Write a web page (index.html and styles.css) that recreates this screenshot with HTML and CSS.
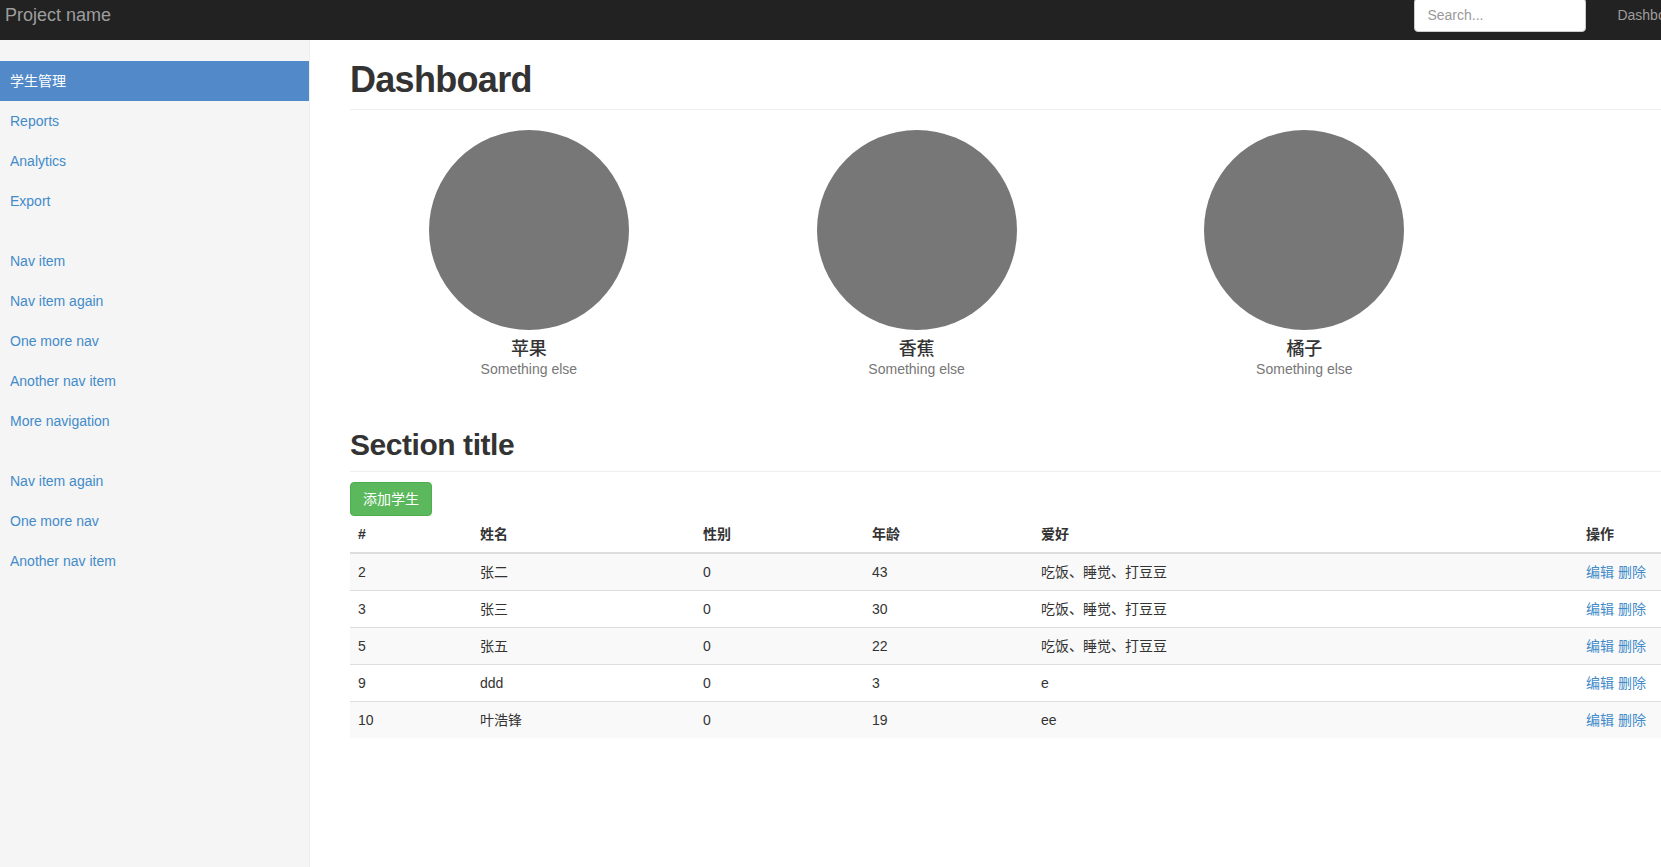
FILE: index.html
```html
<!DOCTYPE html>
<html lang="zh-CN">
<head>
<meta charset="utf-8">
<title>Dashboard</title>
<link rel="stylesheet" href="styles.css">
</head>
<body>
<div class="page">
  <header class="navbar">
    <a class="brand" href="#">Project name</a>
    <div class="nav-right">
      <form class="search-form"><input class="search" type="text" placeholder="Search..."></form>
      <ul class="top-links">
        <li><a href="#">Dashboard</a></li>
        <li><a href="#">Settings</a></li>
        <li><a href="#">Profile</a></li>
        <li><a href="#">Help</a></li>
      </ul>
    </div>
  </header>
  <div class="layout">
    <aside class="sidebar">
      <ul class="nav-group">
        <li class="active"><a href="#">学生管理</a></li>
        <li><a href="#">Reports</a></li>
        <li><a href="#">Analytics</a></li>
        <li><a href="#">Export</a></li>
      </ul>
      <ul class="nav-group">
        <li><a href="#">Nav item</a></li>
        <li><a href="#">Nav item again</a></li>
        <li><a href="#">One more nav</a></li>
        <li><a href="#">Another nav item</a></li>
        <li><a href="#">More navigation</a></li>
      </ul>
      <ul class="nav-group">
        <li><a href="#">Nav item again</a></li>
        <li><a href="#">One more nav</a></li>
        <li><a href="#">Another nav item</a></li>
      </ul>
    </aside>
    <main class="main">
      <h1 class="page-header">Dashboard</h1>
      <div class="placeholders">
        <div class="placeholder">
          <div class="circle"></div>
          <h4>苹果</h4>
          <span class="text-muted">Something else</span>
        </div>
        <div class="placeholder">
          <div class="circle"></div>
          <h4>香蕉</h4>
          <span class="text-muted">Something else</span>
        </div>
        <div class="placeholder">
          <div class="circle"></div>
          <h4>橘子</h4>
          <span class="text-muted">Something else</span>
        </div>
        <div class="placeholder"></div>
      </div>
      <h2 class="sub-header">Section title</h2>
      <div class="actions"><button class="btn-success" type="button">添加学生</button></div>
      <table class="table">
        <thead>
          <tr>
            <th class="c-id">#</th>
            <th class="c-name">姓名</th>
            <th class="c-sex">性别</th>
            <th class="c-age">年龄</th>
            <th class="c-hobby">爱好</th>
            <th class="c-op">操作</th>
          </tr>
        </thead>
        <tbody>
          <tr><td>2</td><td>张二</td><td>0</td><td>43</td><td>吃饭、睡觉、打豆豆</td><td><a href="#">编辑</a> <a href="#">删除</a></td></tr>
          <tr><td>3</td><td>张三</td><td>0</td><td>30</td><td>吃饭、睡觉、打豆豆</td><td><a href="#">编辑</a> <a href="#">删除</a></td></tr>
          <tr><td>5</td><td>张五</td><td>0</td><td>22</td><td>吃饭、睡觉、打豆豆</td><td><a href="#">编辑</a> <a href="#">删除</a></td></tr>
          <tr><td>9</td><td>ddd</td><td>0</td><td>3</td><td>e</td><td><a href="#">编辑</a> <a href="#">删除</a></td></tr>
          <tr><td>10</td><td>叶浩锋</td><td>0</td><td>19</td><td>ee</td><td><a href="#">编辑</a> <a href="#">删除</a></td></tr>
        </tbody>
      </table>
    </main>
  </div>
</div>
</body>
</html>
```

FILE: styles.css
```css
html, body {
  margin: 0;
  padding: 0;
  overflow: hidden;
  background: #fff;
}

body {
  font-family: "Liberation Sans", "Noto Sans CJK SC", sans-serif;
  font-size: 14px;
  line-height: 20px;
  color: #333;
}

a {
  color: #428bca;
  text-decoration: none;
}

ul {
  list-style: none;
  margin: 0;
  padding: 0;
}

.page {
  width: 1911px;
}

/* top bar */
.navbar {
  height: 40px;
  background: #222;
  display: flex;
  justify-content: space-between;
  align-items: flex-start;
  padding-right: 1px;
}

.brand {
  color: #9d9d9d;
  font-size: 18px;
  line-height: 20px;
  padding: 5px 0 0 5px;
}

.nav-right {
  display: flex;
  align-items: flex-start;
  gap: 16px;
}

.search-form {
  margin: -2px 0 0 0;
}

.search {
  box-sizing: border-box;
  width: 172px;
  height: 34px;
  padding: 6px 12px;
  border: 1px solid #ccc;
  border-radius: 4px;
  font-family: inherit;
  font-size: 14px;
  line-height: 20px;
  color: #555;
  background: #fff;
}

.search::placeholder {
  color: #999;
}

.top-links {
  display: flex;
  padding-top: 5px;
}

.top-links a {
  display: block;
  padding: 0 15px;
  color: #9d9d9d;
  line-height: 20px;
}

/* layout */
.layout {
  display: flex;
  min-height: calc(100vh - 40px);
}

.sidebar {
  width: 309px;
  flex: none;
  background: #f5f5f5;
  border-right: 1px solid #eee;
  padding-top: 21px;
}

.nav-group {
  margin-bottom: 20px;
}

.nav-group a {
  display: block;
  padding: 10px 10px;
  line-height: 20px;
}

.nav-group .active a {
  background: #5289c9;
  color: #fff;
}

.main {
  width: 1521px;
  flex: none;
  padding: 20px 40px 0 40px;
}

.page-header {
  margin: 0 0 20px 0;
  padding-bottom: 9px;
  border-bottom: 1px solid #eee;
  font-size: 36px;
  line-height: 1.1;
  font-weight: bold;
  letter-spacing: -0.7px;
}

.placeholders {
  display: grid;
  grid-template-columns: repeat(4, 1fr);
  margin: 0 -15px 49px -15px;
  text-align: center;
}

.placeholder {
  padding: 0 15px;
}

.circle {
  width: 200px;
  height: 200px;
  border-radius: 50%;
  background: #777;
  margin: 0 auto;
}

.placeholder h4 {
  margin: 10px 0 0 0;
  font-size: 18px;
  line-height: 1.1;
  font-weight: 500;
  color: #333;
}

.text-muted {
  color: #777;
}

.sub-header {
  margin: 0 0 10px 0;
  padding-bottom: 10px;
  border-bottom: 1px solid #eee;
  font-size: 30px;
  line-height: 33px;
  font-weight: bold;
  letter-spacing: -0.45px;
}

.actions {
  display: flex;
}

.btn-success {
  font-family: inherit;
  font-size: 14px;
  line-height: 20px;
  padding: 6px 12px;
  color: #fff;
  background: #5cb85c;
  border: 1px solid #4cae4c;
  border-radius: 4px;
}

.table {
  width: 100%;
  border-collapse: collapse;
  border-spacing: 0;
  margin-bottom: 20px;
}

.table th,
.table td {
  padding: 8px;
  line-height: 20px;
  text-align: left;
  vertical-align: top;
}

.table th {
  font-weight: bold;
  border-bottom: 2px solid #ddd;
}

.table td {
  border-top: 1px solid #ddd;
}

.table tbody tr:nth-child(odd) {
  background: #f9f9f9;
}

.c-id { width: 106px; }
.c-name { width: 207px; }
.c-sex { width: 153px; }
.c-age { width: 153px; }
.c-hobby { width: 529px; }
```
